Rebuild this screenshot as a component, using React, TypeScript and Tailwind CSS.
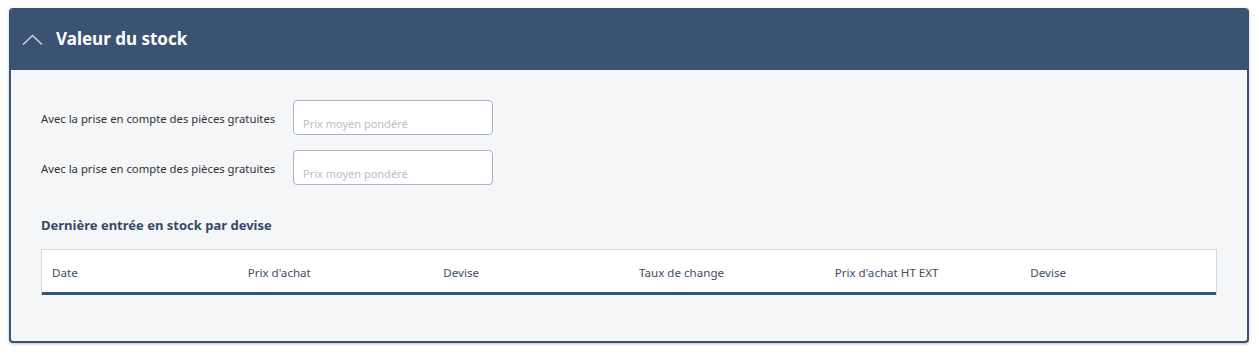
import React from 'react';

const columns = ['Date', "Prix d'achat", 'Devise', 'Taux de change', "Prix d'achat HT EXT", 'Devise'];

function PriceField({ label }: { label: string }) {
  return (
    <div className="flex items-center">
      <label className="w-[252px] pt-[4px] text-[11.3px] text-[#333]">{label}</label>
      <input
        type="text"
        placeholder="Prix moyen pondéré"
        className="h-[35px] w-[200px] rounded-[4px] border border-[#a9b4c4] bg-white px-[9px] pt-[11px] text-[11px] text-[#333] outline-none placeholder:text-[#b9bec6]"
      />
    </div>
  );
}

export default function App() {
  return (
    <div className="min-h-[355px] bg-white pt-[8px] pl-[9px] pr-[10px] font-['Segoe_UI','Noto_Sans',sans-serif]">
      <div className="overflow-hidden rounded-[4px] border-2 border-t-0 border-[#3a5372] bg-[#f5f6f8] shadow-[0_1px_3px_rgba(0,0,0,0.25)]">
        <div className="flex h-[62px] items-center bg-[#3a5372] pl-[11px]">
          <svg width="21" height="11" viewBox="0 0 21 11" className="text-[#c6cfdb]">
            <path d="M1 10.5 L10.5 1.5 L20 10.5" fill="none" stroke="currentColor" strokeWidth="1.6" />
          </svg>
          <h2 className="ml-[13px] text-[17px] font-bold text-white">Valeur du stock</h2>
        </div>

        <div className="px-[30px] pt-[30px] pb-[46px]">
          <div className="flex flex-col gap-[15px]">
            <PriceField label="Avec la prise en compte des pièces gratuites" />
            <PriceField label="Avec la prise en compte des pièces gratuites" />
          </div>

          <h3 className="mt-[31px] text-[13px] font-bold text-[#344a66]">Dernière entrée en stock par devise</h3>

          <div className="mt-[13px] w-[1176px] border border-b-0 border-[#d3d6da] bg-white">
            <div className="grid h-[45px] grid-cols-6 items-center border-b-[3px] border-[#3a5372] pt-[5px] text-[11.6px] text-[#3d4d63]">
              {columns.map((c, i) => (
                <div key={i} className="pl-[10px]">{c}</div>
              ))}
            </div>
          </div>
        </div>
      </div>
    </div>
  );
}
